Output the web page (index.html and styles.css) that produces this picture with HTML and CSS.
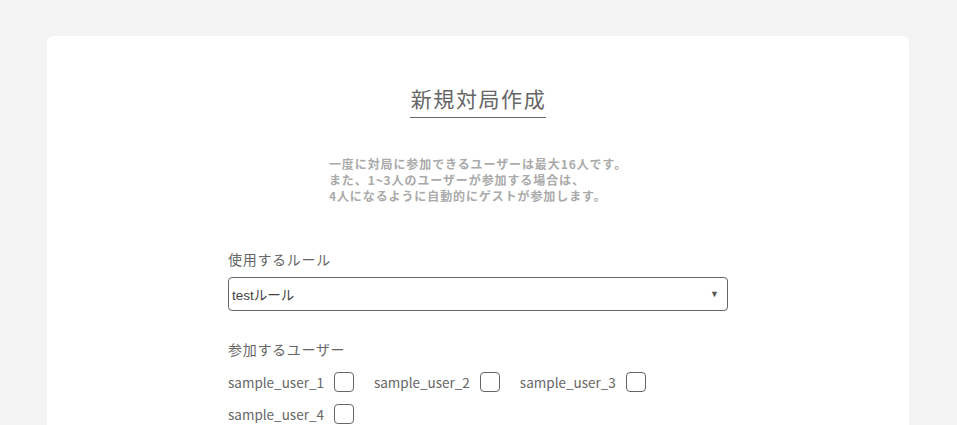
FILE: index.html
```html
<!DOCTYPE html>
<html lang="ja">
<head>
<meta charset="utf-8">
<link rel="stylesheet" href="styles.css">
</head>
<body>
<div class="card">
  <div class="title-wrap"><h1 class="title">新規対局作成</h1></div>
  <div class="desc-wrap">
    <p class="desc">一度に対局に参加できるユーザーは最大16人です。<br>また、1~3人のユーザーが参加する場合は、<br>4人になるように自動的にゲストが参加します。</p>
  </div>
  <div class="form">
    <div class="field">
      <div class="label">使用するルール</div>
      <div class="select"><span class="select-text">testルール</span><span class="arrow">▼</span></div>
    </div>
    <div class="field">
      <div class="label label-users">参加するユーザー</div>
      <div class="users">
        <label class="user"><span>sample_user_1</span><span class="check"></span></label>
        <label class="user"><span>sample_user_2</span><span class="check"></span></label>
        <label class="user"><span>sample_user_3</span><span class="check"></span></label>
        <label class="user"><span>sample_user_4</span><span class="check"></span></label>
      </div>
    </div>
  </div>
</div>
</body>
</html>
```
FILE: styles.css
```css
html, body { margin: 0; padding: 0; }
body {
  background: #f3f3f3;
  font-family: "Noto Sans CJK JP", "Noto Sans", sans-serif;
  color: #666;
}
.card {
  margin: 36px 0 0 47px;
  width: 862px;
  min-height: 420px;
  background: #fff;
  border-radius: 6px;
  padding-top: 49px;
  box-sizing: border-box;
}
.title-wrap { display: flex; justify-content: center; }
.title {
  margin: 0;
  font-size: 21px;
  font-weight: 400;
  line-height: 26px;
  color: #666;
  padding: 0 0 6px 1px;
  border-bottom: 1px solid #666;
  letter-spacing: 1.6px;
}
.desc-wrap { display: flex; justify-content: center; margin-top: 38px; }
.desc {
  margin: 0;
  font-size: 12px;
  line-height: 16px;
  font-weight: 700;
  color: #aaa;
  letter-spacing: 0.9px;
}
.form { width: 500px; margin: 45px auto 0; }
.field { margin-bottom: 28px; }
.label {
  font-size: 14px;
  line-height: 20px;
  color: #666;
  margin-bottom: 8px;
  letter-spacing: 0.7px;
}
.label-users { margin-bottom: 13px; }
.select {
  height: 34px;
  border: 1px solid #666;
  border-radius: 4px;
  box-sizing: border-box;
  display: flex;
  align-items: center;
  justify-content: space-between;
  padding: 0 8px 0 3px;
  font-family: "Liberation Sans", Arial, "Noto Sans CJK JP", sans-serif;
  font-size: 13.5px;
  color: #444;
}
.arrow { font-size: 9px; color: #555; }
.users { display: flex; flex-wrap: wrap; column-gap: 20px; row-gap: 12px; width: 440px; }
.user { display: flex; align-items: center; gap: 10px; font-size: 13.5px; line-height: 20px; color: #666; }
.check {
  width: 20px; height: 20px;
  box-sizing: border-box;
  border: 1px solid #666;
  border-radius: 4px;
}
```
